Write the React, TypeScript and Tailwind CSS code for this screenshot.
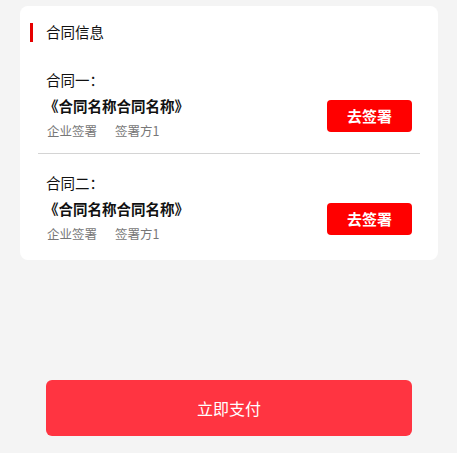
const contracts = [
  { label: '合同一：', name: '《合同名称合同名称》', party: '签署方1' },
  { label: '合同二：', name: '《合同名称合同名称》', party: '签署方1' },
];

const ContractItem = ({ label, name, party, first }: { label: string; name: string; party: string; first: boolean }) => (
  <div className={`flex flex-row justify-between px-[8px] ${first ? 'pt-[25px] pb-[10px]' : 'pt-[16px] pb-[14px]'}`}>
    <div className="flex flex-col">
      <p className="text-[14.5px] leading-[26px] text-[#111]">{label}</p>
      <p className="text-[14.5px] leading-[26px] font-bold text-[#111] -ml-[2px]">{name}</p>
      <p className="text-[12.5px] leading-[24px] text-[#777] ml-[1px]">
        企业签署<span className="ml-[18px]">{party}</span>
      </p>
    </div>
    <button className="mt-[33px] w-[85px] h-[32px] rounded-[4px] bg-[#ff0000] text-white text-[15px] font-semibold">
      去签署
    </button>
  </div>
);

const App = () => {
  return (
    <div
      className="h-[453px] bg-[#f4f4f4] pt-[6px] flex flex-col"
      style={{ fontFamily: '"Noto Sans CJK SC", "Noto Sans", sans-serif' }}
    >
      <div className="ml-[20px] mr-[19px] bg-white rounded-[8px] pt-[16px] px-[18px]">
        <div className="flex flex-row items-center h-[20px]">
          <div className="w-[3px] h-[19px] bg-[#e60000] -ml-[8px]" />
          <p className="ml-[13px] text-[14.5px] leading-[20px] text-[#111]">合同信息</p>
        </div>
        {contracts.map((c, idx) => (
          <div key={idx}>
            {idx > 0 && <div className="h-[1px] bg-[#d4d4d4]" />}
            <ContractItem {...c} first={idx === 0} />
          </div>
        ))}
      </div>
      <button className="mt-[120px] ml-[46px] mr-[45px] h-[56px] rounded-[6px] bg-[#ff3441] text-white text-[16px]">
        立即支付
      </button>
    </div>
  );
};

export default App;
